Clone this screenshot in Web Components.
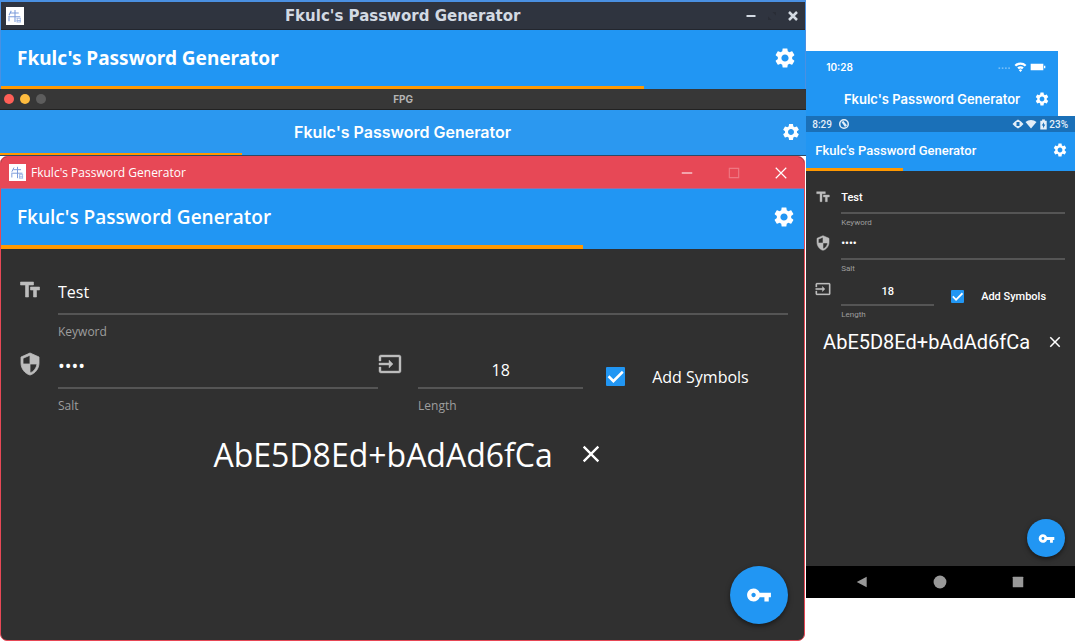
<!DOCTYPE html>
<html lang="en">
<head>
<meta charset="utf-8">
<title>Fkulc's Password Generator</title>
<style>
  body { margin: 0; background: #fff; }
</style>
</head>
<body>
<fpg-showcase></fpg-showcase>

<script>
const ICONS = {
  settings: '<path d="M19.14 12.94c.04-.3.06-.61.06-.94 0-.32-.02-.64-.07-.94l2.03-1.58c.18-.14.23-.41.12-.61l-1.92-3.32c-.12-.22-.37-.29-.59-.22l-2.39.96c-.5-.38-1.03-.7-1.62-.94l-.36-2.54c-.04-.24-.24-.41-.48-.41h-3.84c-.24 0-.43.17-.47.41l-.36 2.54c-.59.24-1.13.57-1.62.94l-2.39-.96c-.22-.08-.47 0-.59.22L2.74 8.87c-.12.21-.08.47.12.61l2.03 1.58c-.05.3-.09.63-.09.94s.02.64.07.94l-2.03 1.58c-.18.14-.23.41-.12.61l1.92 3.32c.12.22.37.29.59.22l2.39-.96c.5.38 1.03.7 1.62.94l.36 2.54c.05.24.24.41.48.41h3.84c.24 0 .44-.17.47-.41l.36-2.54c.59-.24 1.13-.56 1.62-.94l2.39.96c.22.08.47 0 .59-.22l1.92-3.32c.12-.22.07-.47-.12-.61l-2.01-1.58zM12 15.6c-1.98 0-3.6-1.62-3.6-3.6s1.62-3.6 3.6-3.6 3.6 1.62 3.6 3.6-1.62 3.6-3.6 3.6z"/>',
  size: '<path d="M2.5 4v3h5v12h3V7h5V4h-13zm19 5h-9v3h3v7h3v-7h3V9z" stroke="currentColor" stroke-width=".6"/>',
  shield: '<path d="M12 1L3 5v6c0 5.55 3.84 10.74 9 12 5.16-1.26 9-6.45 9-12V5l-9-4zm0 10.99h7c-.53 4.12-3.28 7.79-7 8.94V12H5V6.3l7-3.11v8.8z" stroke="currentColor" stroke-width=".8"/>',
  input: '<path d="M21 3.01H3c-1.1 0-2 .9-2 2V9h2V4.99h18v14.03H3V15H1v4.01c0 1.1.9 1.98 2 1.98h18c1.1 0 2-.88 2-1.98v-14c0-1.11-.9-2-2-2zM11 16l4-4-4-4v3H1v2h10v3z" stroke="currentColor" stroke-width=".4"/>',
  key: '<path d="M12.65 10C11.83 7.67 9.61 6 7 6c-3.31 0-6 2.69-6 6s2.69 6 6 6c2.61 0 4.83-1.67 5.65-4H17v4h4v-4h2v-4H12.65zM7 14c-1.1 0-2-.9-2-2s.9-2 2-2 2 .9 2 2-.9 2-2 2z"/>',
  close: '<path d="M19 6.41 17.59 5 12 10.59 6.41 5 5 6.41 10.59 12 5 17.59 6.41 19 12 13.41 17.59 19 19 17.59 13.41 12z"/>',
  'bold-minimize': '<path d="M3 10h18v4H3z"/>',
  'bold-close': '<path d="M4 4l16 16M20 4L4 20" stroke="currentColor" stroke-width="5" fill="none"/>',
  'dim-expand': '<path d="M13 4h7v7zM4 13v7h7z"/>',
  'thin-minimize': '<path d="M3 11h18v2H3z"/>',
  'thin-maximize': '<path d="M4 4h16v16H4z" stroke="currentColor" stroke-width="2" fill="none"/>',
  'thin-close': '<path d="M3 3l18 18M21 3L3 21" stroke="currentColor" stroke-width="2" fill="none"/>',
  logo: '<path d="M0 0h24v24H0z" fill="#fff"/><path d="M7 5L4 11M6 8h11M3 13h16M12 4v16M4 14v5" stroke="#7c9cdb" stroke-width="1.4" fill="none"/><path d="M14 15h6M14 18h6M14 20h6M15 15v5M19 15v5" stroke="#9ab3e4" stroke-width="1.2" fill="none"/>',
  signal: '<path d="M1 14h3v2H1zM7 14h3v2H7zM13 14h3v2h-3zM19 14h3v2h-3z"/>',
  wifi: '<path d="M1 9a16 16 0 0 1 22 0l-3 3a12 12 0 0 0-16 0zM6 14a9 9 0 0 1 12 0l-3 3a5 5 0 0 0-6 0zM12 22l-3-3a4 4 0 0 1 6 0z"/>',
  'wifi-full': '<path d="M12 21L1 8a17 17 0 0 1 22 0z"/>',
  battery: '<path d="M1 7h19v10H1zM21 10h2v4h-2z"/>',
  'battery-charge': '<path fill-rule="evenodd" d="M9 1h6v3h4v19H5V4h4zM13 7l-5 7h3v6l5-8h-3z"/>',
  target: '<path d="M12 2a10 10 0 1 0 0 20 10 10 0 0 0 0-20zm0 3a7 7 0 1 1 0 14 7 7 0 0 1 0-14z"/><path d="M7 8l4-2 7 9-4 3z"/>',
  vibrate: '<path fill-rule="evenodd" d="M12 3l6 4 5 5-5 5-6 4-6-4-5-5 5-5zM9 8v8h6V8z"/>',
  back: '<path d="M20 3v18L3 12z"/>',
  home: '<circle cx="12" cy="12" r="11"/>',
  recents: '<rect x="3" y="3" width="18" height="18" rx="1"/>'
};

function define(name, markup, setup) {
  const template = document.createElement('template');
  template.innerHTML = markup;
  customElements.define(name, class extends HTMLElement {
    constructor() {
      super();
      this.attachShadow({ mode: 'open' }).append(template.content.cloneNode(true));
    }
    connectedCallback() { if (setup) setup(this, this.shadowRoot); }
  });
}

define('fpg-icon', `
  <style>
    :host { display: block; flex: none; width: var(--icon, 24px); height: var(--icon, 24px); }
    svg { display: block; width: 100%; height: 100%; fill: currentColor; }
  </style>
  <svg viewBox="0 0 24 24" aria-hidden="true"></svg>`,
  (host, root) => { root.querySelector('svg').innerHTML = ICONS[host.getAttribute('name')]; });

/* Blue app bar: title, settings button and the orange timer strip. */
define('app-bar', `
  <style>
    :host { display: grid; grid-template-rows: 1fr var(--strip, 3px); background: var(--bar, #2196f3); color: #fff; }
    .row { display: flex; align-items: center; padding: 0 var(--right, 8px) 0 var(--left, 16px); }
    h1 { flex: 1; margin: 0; font-size: inherit; font-weight: inherit; white-space: nowrap; text-align: var(--align, left); }
    button { padding: 0; border: 0; background: none; color: inherit; }
    .strip { width: var(--progress, 0%); background: #ff9800; }
  </style>
  <div class="row"><h1><slot></slot></h1><button aria-label="Settings"><fpg-icon name="settings"></fpg-icon></button></div>
  <div class="strip"></div>`);

define('text-field', `
  <style>
    :host { display: flex; color: #fff; }
    fpg-icon { margin: var(--icon-top) calc(var(--icon-col) - var(--icon)) 0 0; color: #bdbdbd; }
    .field { flex: 1; min-width: 0; display: flex; flex-direction: column; }
    input { box-sizing: border-box; width: 100%; height: var(--input-h); margin: 0; padding: var(--input-pad, 0) 0 0;
      border: 0; border-bottom: 2px solid #555; background: none; outline: 0; color: inherit;
      font: inherit; text-align: var(--input-align, left); }
    input[type=password] { font-size: var(--dot-size); }
    label { padding: var(--label-pad); font-size: var(--label-size); line-height: var(--label-line); font-weight: 400; color: #9e9e9e; }
  </style>
  <fpg-icon></fpg-icon>
  <div class="field"><input id="f"><label for="f"></label></div>`,
  (host, root) => {
    const input = root.querySelector('input');
    input.type = host.getAttribute('type') || 'text';
    input.value = host.getAttribute('value');
    root.querySelector('label').textContent = host.getAttribute('label');
    const icon = root.querySelector('fpg-icon');
    icon.setAttribute('name', host.getAttribute('icon'));
    icon.shadowRoot.querySelector('svg').innerHTML = ICONS[host.getAttribute('icon')];
  });

define('check-field', `
  <style>
    :host { display: flex; color: #fff; }
    .pair { display: flex; align-items: center; align-self: flex-start; gap: var(--check-gap); height: var(--check-h); }
    input { appearance: none; display: block; width: var(--check); height: var(--check); margin: 0; border-radius: 1px; background: #2196f3; }
    input:checked::before { content: ""; display: block; width: 100%; height: 100%; background: #fff;
      clip-path: polygon(8% 54%, 17% 44%, 38% 65%, 83% 20%, 92% 30%, 38% 84%); }
    label { white-space: nowrap; }
  </style>
  <div class="pair"><input type="checkbox" id="c" checked><label for="c"><slot></slot></label></div>`);

define('password-output', `
  <style>
    :host { display: flex; align-items: center; justify-content: center; gap: var(--out-gap); height: var(--out-h);
      padding-left: var(--out-left); color: #fff; }
    output { font-size: var(--out-size); font-weight: 400; white-space: nowrap; }
    button { padding: 0; border: 0; background: none; color: inherit; }
    fpg-icon { --icon: var(--out-icon); }
  </style>
  <output><slot></slot></output>
  <button aria-label="Clear"><fpg-icon name="close"></fpg-icon></button>`);

define('fab-button', `
  <style>
    :host { display: block; }
    button { display: grid; place-items: center; width: var(--fab); height: var(--fab); padding: 0; border: 0; border-radius: 50%;
      background: #2196f3; color: #fff; box-shadow: 0 2px 5px rgba(0,0,0,.5); }
    fpg-icon { --icon: var(--fab-icon); }
  </style>
  <button aria-label="Generate password"><fpg-icon name="key"></fpg-icon></button>`);

define('linux-window', `
  <style>
    :host { display: block; border: 1px solid #4a90e2; border-width: 2px 1px 0; background: #2f343f; }
    header { display: grid; grid-template-columns: 1fr auto 1fr; align-items: center; height: 28px; padding: 0 6px 0 5px; color: #d3dae3;
      box-sizing: border-box; border-bottom: 1px solid #23262e; font: 700 15px "DejaVu Sans", sans-serif; }
    .logo { --icon: 18px; }
    nav { display: flex; justify-content: flex-end; gap: 9px; }
    nav fpg-icon { --icon: 12px; }
    .dim { color: #292d36; }
    app-bar { height: 59px; --progress: 80%; font: 700 19px "Noto Sans", sans-serif; }
  </style>
  <header><fpg-icon class="logo" name="logo"></fpg-icon><span>Fkulc's Password Generator</span>
    <nav><fpg-icon name="bold-minimize"></fpg-icon><fpg-icon class="dim" name="dim-expand"></fpg-icon><fpg-icon name="bold-close"></fpg-icon></nav></header>
  <app-bar>Fkulc's Password Generator</app-bar>`);

define('mac-window', `
  <style>
    :host { display: block; background: #2f343f; }
    header { display: grid; grid-template-columns: 1fr auto 1fr; align-items: center; box-sizing: border-box; height: 21px; padding: 0 4px;
      border-bottom: 1px solid #222; border-radius: 4px 4px 0 0; background: #373737; color: #b4b4b4; font: 700 10px Inter, sans-serif; }
    .lights { display: flex; gap: 6px; }
    i { width: 10px; height: 10px; border-radius: 50%; background: #ff5f57; }
    i:nth-child(2) { background: #febc3f; }
    i:nth-child(3) { background: #5d5d5d; }
    app-bar { height: 46px; --bar: #2b98f0; --strip: 2px; --progress: 30%; --align: center; --icon: 20px; --right: 5px; --left: 24px;
      font: 600 16px Inter, sans-serif; border-bottom: 1px solid #2e4a66; box-sizing: border-box; }
  </style>
  <header><div class="lights"><i></i><i></i><i></i></div><span>FPG</span></header>
  <app-bar>Fkulc's Password Generator</app-bar>`);

define('windows-window', `
  <style>
    :host { display: flex; flex-direction: column; margin-right: 1px; border: 1px solid #e74856; border-radius: 7px; overflow: hidden;
      background: #303030; font: 400 16px "Open Sans", "Noto Sans", sans-serif; }
    header { display: flex; align-items: center; gap: 5px; height: 31px; padding: 0 16px 0 8px; background: #e74856; color: #fff; font-size: 12px;
      border-bottom: 1px solid #a06aa0; }
    .logo { --icon: 17px; }
    span { flex: 1; }
    nav { display: flex; gap: 33px; }
    nav fpg-icon { --icon: 14px; }
    .dim { color: #ee7782; }
    app-bar { height: 60px; --strip: 4px; --progress: 72.5%; font-weight: 600; font-size: 19px; }
    main { flex: 1; display: flex; flex-direction: column; padding: 21px 16px 21px 17px; --icon: 24px; --icon-col: 40px; --icon-top: 8px;
      --input-h: 45px; --dot-size: 18px; --label-pad: 9px 0 4px; --label-size: 12px; --label-line: 16px;
      --check: 19px; --check-gap: 27px; --check-h: 65px; --out-gap: 24px; --out-h: 72px; --out-left: 12px; --out-size: 32px; --out-icon: 28px;
      --fab: 58px; --fab-icon: 26px; }
    .row { display: grid; grid-template-columns: 360fr 205fr 205fr; }
    .length { --input-align: center; --input-pad: 8px; }
    check-field { padding-left: 23px; }
    fab-button { margin: auto 0 -5px auto; }
  </style>
  <header><fpg-icon class="logo" name="logo"></fpg-icon><span>Fkulc's Password Generator</span>
    <nav><fpg-icon name="thin-minimize"></fpg-icon><fpg-icon class="dim" name="thin-maximize"></fpg-icon><fpg-icon name="thin-close"></fpg-icon></nav></header>
  <app-bar>Fkulc's Password Generator</app-bar>
  <main>
    <text-field icon="size" label="Keyword" value="Test"></text-field>
    <div class="row">
      <text-field icon="shield" label="Salt" type="password" value="salt"></text-field>
      <text-field class="length" icon="input" label="Length" value="18"></text-field>
      <check-field>Add Symbols</check-field>
    </div>
    <password-output>AbE5D8Ed+bAdAd6fCa</password-output>
    <fab-button></fab-button>
  </main>`);

define('ios-screen', `
  <style>
    :host { display: block; margin-right: 17px; background: #2196f3; color: #fff; }
    header { display: flex; align-items: center; height: 31px; padding: 0 12px 0 20px; font: 600 10px Inter, sans-serif; }
    time { flex: 1; }
    nav { display: flex; align-items: center; gap: 3px; --icon: 13px; }
    .battery { --icon: 16px; }
    .signal { opacity: .5; }
    app-bar { height: 34px; --strip: 0px; --align: center; --icon: 16px; --right: 8px; --left: 24px; font: 600 13px Inter, sans-serif; }
  </style>
  <header><time>10:28</time><nav><fpg-icon class="signal" name="signal"></fpg-icon><fpg-icon name="wifi"></fpg-icon><fpg-icon class="battery" name="battery"></fpg-icon></nav></header>
  <app-bar>Fkulc's Password Generator</app-bar>`);

define('android-screen', `
  <style>
    :host { display: flex; flex-direction: column; background: #303030; font: 500 11px Roboto, sans-serif; }
    header { display: flex; align-items: center; gap: 6px; height: 16px; padding: 0 7px 0 6px; background: #1a70b8; color: #e3eef8; font-size: 10px; --icon: 12px; }
    nav { display: flex; align-items: center; gap: 1px; margin-left: auto; }
    .battery { display: flex; align-items: center; --icon: 11px; }
    app-bar { height: 39px; --progress: 36%; --icon: 16px; --right: 7px; --left: 9px; font-size: 13px; }
    main { flex: 1; display: flex; flex-direction: column; padding: 12px 10px 9px 9px; --icon: 16px; --icon-col: 26px; --icon-top: 6px;
      --input-h: 31px; --dot-size: 11px; --label-pad: 4px 0 1px; --label-size: 8px; --label-line: 10px;
      --check: 13px; --check-gap: 17px; --check-h: 43px; --out-gap: 16px; --out-h: 42px; --out-left: 7px; --out-size: 20px; --out-icon: 18px;
      --fab: 38px; --fab-icon: 17px; color: #fff; }
    .row { display: grid; grid-template-columns: 119fr 131fr; }
    .length { --input-align: center; --input-pad: 4px; }
    check-field { padding-left: 17px; }
    fab-button { margin: auto 0 0 auto; }
    footer { display: flex; justify-content: space-between; align-items: center; height: 32px; padding: 0 50px 0 49px; background: #000; color: #999; --icon: 14px; }
  </style>
  <header><time>8:29</time><fpg-icon name="target"></fpg-icon>
    <nav><fpg-icon name="vibrate"></fpg-icon><fpg-icon name="wifi-full"></fpg-icon><div class="battery"><fpg-icon name="battery-charge"></fpg-icon><span>23%</span></div></nav></header>
  <app-bar>Fkulc's Password Generator</app-bar>
  <main>
    <text-field icon="size" label="Keyword" value="Test"></text-field>
    <text-field icon="shield" label="Salt" type="password" value="salt"></text-field>
    <div class="row">
      <text-field class="length" icon="input" label="Length" value="18"></text-field>
      <check-field>Add Symbols</check-field>
    </div>
    <password-output>AbE5D8Ed+bAdAd6fCa</password-output>
    <fab-button></fab-button>
  </main>
  <footer><fpg-icon name="back"></fpg-icon><fpg-icon name="home"></fpg-icon><fpg-icon name="recents"></fpg-icon></footer>`);

define('fpg-showcase', `
  <style>
    :host { display: grid; grid-template-columns: minmax(0, 3fr) minmax(0, 1fr); min-height: 100vh; }
    .desktop, .mobile { display: flex; flex-direction: column; }
    .mobile { padding: 51px 0 43px; }
    windows-window, android-screen { flex: 1; }
  </style>
  <section class="desktop"><linux-window></linux-window><mac-window></mac-window><windows-window></windows-window></section>
  <section class="mobile"><ios-screen></ios-screen><android-screen></android-screen></section>`);
</script>
</body>
</html>
